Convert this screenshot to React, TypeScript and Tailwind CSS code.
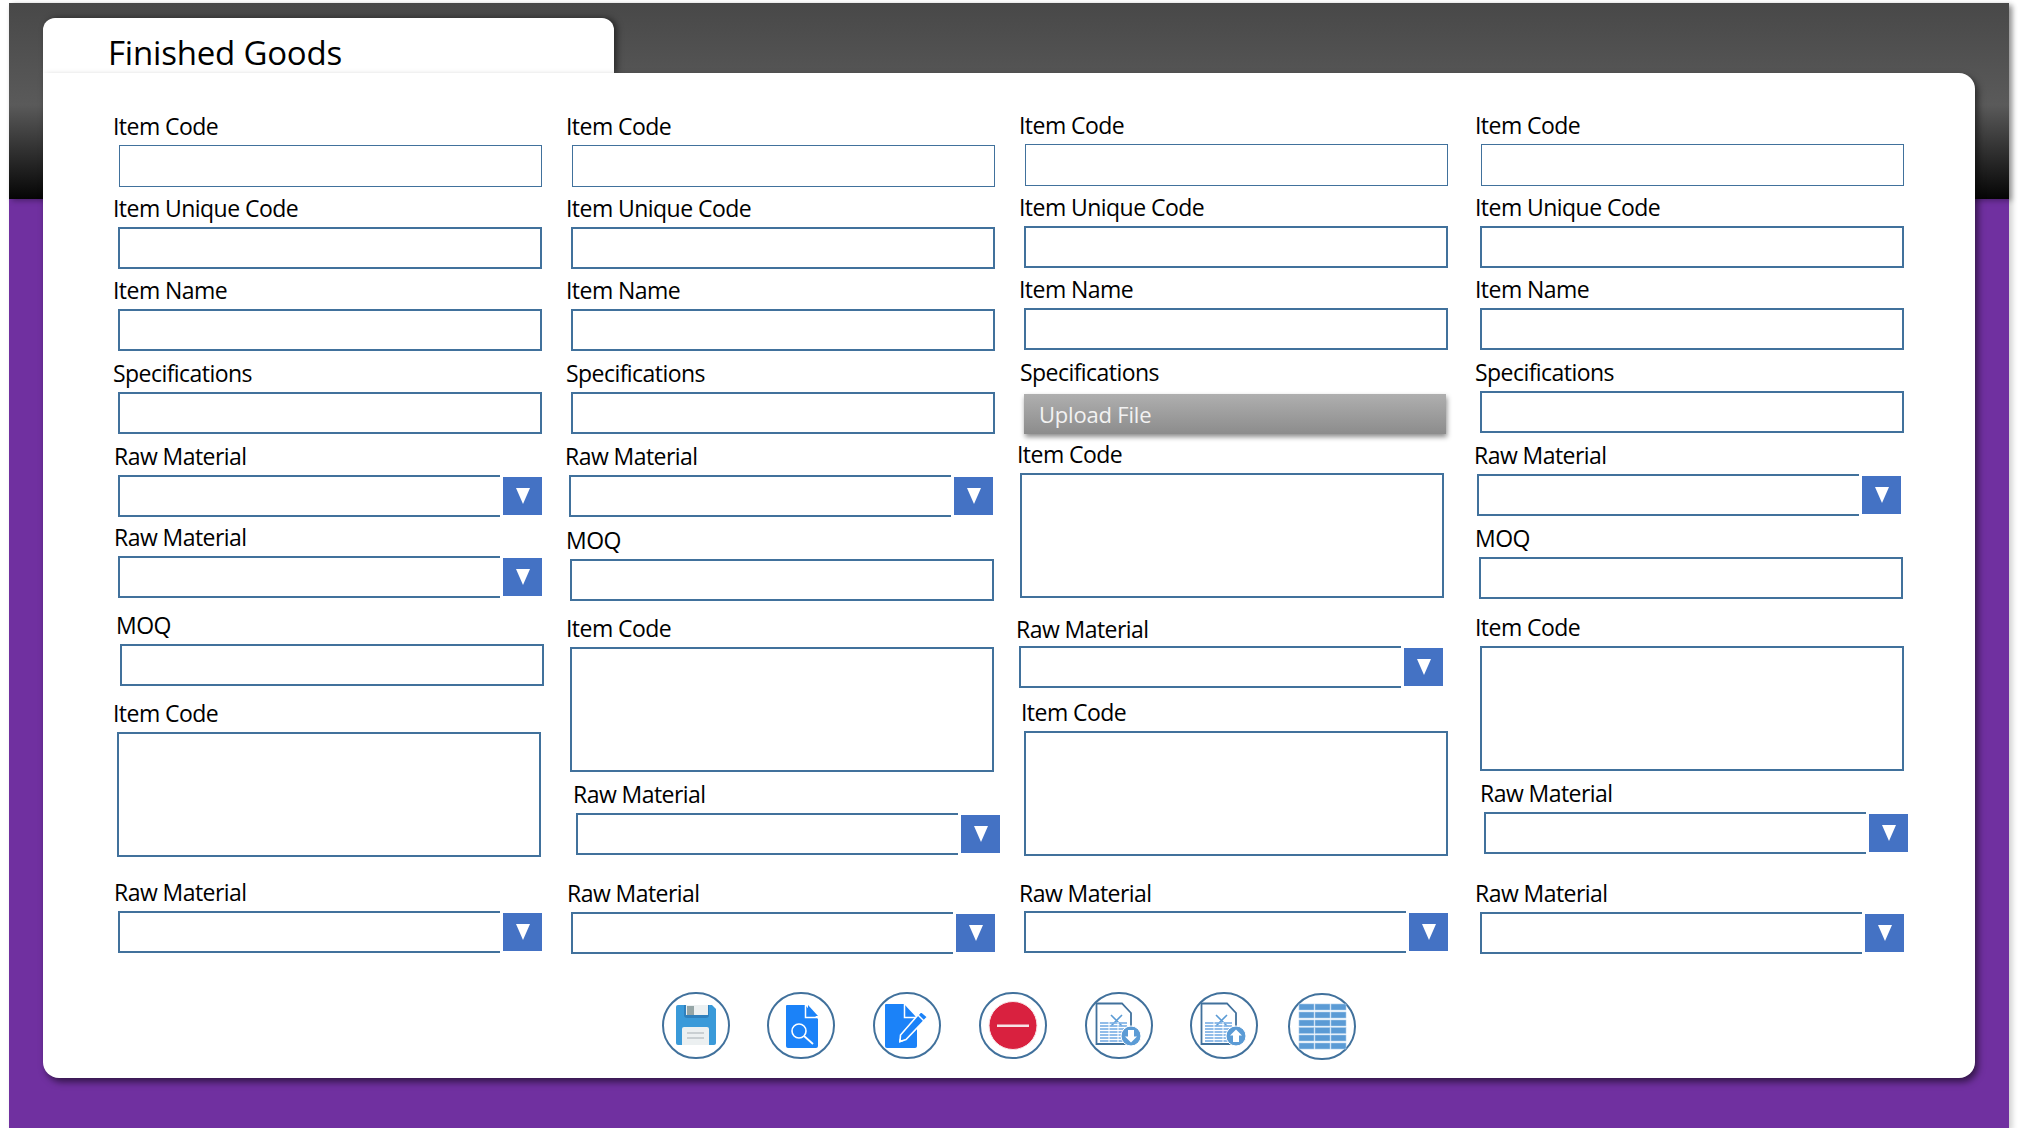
import type { ReactNode } from "react";

const BOX = "border-2 border-[#41719c] bg-white";

function Label({ text, className = "" }: { text: string; className?: string }) {
  return <div className={`h-[26px] text-[23px] leading-[26px] tracking-[-0.55px] text-black whitespace-nowrap ${className}`}>{text}</div>;
}

function InputField({ label, wrap = "", labelClass = "", boxClass = "ml-[5px]", thin = false }: {
  label: string; wrap?: string; labelClass?: string; boxClass?: string; thin?: boolean;
}) {
  return (
    <div className={`flex flex-col gap-[6px] ${wrap}`}>
      <Label text={label} className={labelClass} />
      {thin ? (
        <div className="ml-[6px] h-[42px] w-[423px] border border-[#41719c] bg-white" />
      ) : (
        <div className={`h-[42px] w-[424px] ${BOX} ${boxClass}`} />
      )}
    </div>
  );
}

function AreaField({ wrap = "", labelClass = "", boxClass = "" }: { wrap?: string; labelClass?: string; boxClass?: string }) {
  return (
    <div className={`flex flex-col gap-[6px] ${wrap}`}>
      <Label text="Item Code" className={labelClass} />
      <div className={`h-[125px] w-[424px] ${BOX} ${boxClass}`} />
    </div>
  );
}

function SelectField({ label = "Raw Material", wrap = "", gap = "gap-[6px]", labelClass = "", boxClass = "ml-[5px]" }: {
  label?: string; wrap?: string; gap?: string; labelClass?: string; boxClass?: string;
}) {
  return (
    <div className={`flex flex-col ${gap} ${wrap}`}>
      <Label text={label} className={labelClass} />
      <div className={`flex h-[42px] w-[424px] items-center gap-[3px] ${boxClass}`}>
        <div className="h-[42px] w-[382px] border-y-2 border-l-2 border-[#41719c] bg-white" />
        <div className="flex h-[38px] w-[39px] items-center justify-center bg-[#4472c4]">
          <svg width="14" height="16" viewBox="0 0 14 16"><polygon points="0,0 14,0 7,16" fill="#fff" /></svg>
        </div>
      </div>
    </div>
  );
}

function Ring({ children, className = "" }: { children: ReactNode; className?: string }) {
  return (
    <div className={`h-[67px] w-[68px] shrink-0 rounded-full border-[2px] border-[#41719c] bg-white ${className}`}>
      <svg width="64" height="63" viewBox="2 2 64 63" className="block">{children}</svg>
    </div>
  );
}

function SheetIcon({ up }: { up?: boolean }) {
  const rows = [31, 34, 37, 40, 43, 46, 49];
  return (
    <>
      <path d="M11.5 11.5H37L46 21V52H11.5Z" fill="#fff" stroke="#41719c" strokeWidth="1.8" />
      <path d="M26 23L37 34M37 23L26 34" stroke="#5b9bd5" strokeWidth="1.6" />
      {rows.map((y) => (
        <path key={y} d={`M15 ${y}H42`} stroke="#7fb2e5" strokeWidth="1.7" />
      ))}
      <path d="M24 30V51M33 30V51" stroke="#fff" strokeWidth="1" />
      <circle cx="46" cy="44" r="10" fill="#5b9bd5" stroke="#fff" strokeWidth="1" />
      {up ? (
        <path d="M46 37.5L52 43.5H49V50H43V43.5H40Z" fill="#fff" />
      ) : (
        <path d="M46 50.5L52 44.5H49V38H43V44.5H40Z" fill="#fff" />
      )}
    </>
  );
}

function ToolBar() {
  const cols = [11, 27, 43];
  const rows = [11, 19, 27, 34.5, 42, 50];
  return (
    <div className="ml-[549px] mt-[38px] flex">
      <Ring>
        <path d="M14 15a2 2 0 0 1 2-2h34l4 4v34a2 2 0 0 1-2 2H16a2 2 0 0 1-2-2Z" fill="#3a9ad9" />
        <path d="M22 13h25v10a3 3 0 0 1-3 3H25a3 3 0 0 1-3-3Z" fill="#2f80bd" />
        <rect x="24" y="13" width="22" height="10" fill="#ecf0f1" />
        <rect x="25" y="14" width="7" height="9" fill="#95a5a6" />
        <path d="M20 37a2 2 0 0 1 2-2h23a2 2 0 0 1 2 2v16H20Z" fill="#ecf0f1" />
        <path d="M25 41H42M25 46H42" stroke="#bdc3c7" strokeWidth="1.6" />
      </Ring>
      <Ring className="ml-[37px]">
        <path d="M20 13H38L51 27V54a2 2 0 0 1-2 2H21a2 2 0 0 1-2-2V14a1 1 0 0 1 1-1Z" fill="#1b82f8" />
        <path d="M41 13L51 24H41Z" fill="#1b82f8" />
        <path d="M38.5 13V25.5H51" fill="none" stroke="#fff" strokeWidth="1.5" />
        <circle cx="32" cy="39" r="7" fill="none" stroke="#fff" strokeWidth="1.6" />
        <path d="M37 44L46 52" stroke="#fff" strokeWidth="1.8" />
      </Ring>
      <Ring className="ml-[38px]">
        <path d="M13 12H31L44 26V54a2 2 0 0 1-2 2H14a2 2 0 0 1-2-2V13a1 1 0 0 1 1-1Z" fill="#1b82f8" />
        <path d="M31.5 12V25.5H44" fill="none" stroke="#fff" strokeWidth="1.5" />
        <path d="M48 19.5L54.5 25L33 47.5L27 49.5L27.5 43Z" fill="#1b82f8" stroke="#fff" strokeWidth="1.6" />
        <path d="M45 23L51 29" stroke="#fff" strokeWidth="1.4" />
        <path d="M26.5 46.5L26 50.5L30 49.5Z" fill="#fff" />
      </Ring>
      <Ring className="ml-[38px]">
        <circle cx="34" cy="33.5" r="24" fill="#d9213f" stroke="#f8e6e9" strokeWidth="1" />
        <rect x="18" y="32.5" width="32" height="2.5" fill="#f6e3e6" />
      </Ring>
      <Ring className="ml-[38px]"><SheetIcon /></Ring>
      <Ring className="ml-[37px]"><SheetIcon up /></Ring>
      <Ring className="ml-[30px] mt-px">
        {rows.map((y) => cols.map((x) => (
          <rect key={`${x}-${y}`} x={x} y={y} width="15" height="6" fill="#5b9bd5" stroke="#a9cbeb" strokeWidth="0.6" />
        )))}
      </Ring>
    </div>
  );
}

export default function App() {
  return (
    <div className="h-[1128px] w-[2018px] overflow-hidden bg-white pt-[3px] pl-[9px] font-['Open_Sans',sans-serif]">
      <div className="h-[1125px] w-[2000px] bg-[#7030a0] shadow-[3px_3px_6px_rgba(0,0,0,0.2)]">
        <div className="h-[196px] bg-[linear-gradient(180deg,#484848_0%,#5a5a5a_52%,#050505_100%)] shadow-[3px_2px_5px_rgba(0,0,0,0.3)]" />
        <div className="-mt-[181px] ml-[34px] w-[1932px]">
          <div className="h-[55px] w-[571px] rounded-t-[12px] bg-white pl-[65px] pt-[14px] shadow-[3px_0_6px_rgba(0,0,0,0.5)]">
            <div className="text-[33px] leading-[42px] tracking-[-0.2px] text-black">Finished Goods</div>
          </div>
          <div className="relative h-[1005px] rounded-b-[16px] rounded-tr-[16px] bg-white pl-[70px] pt-[40px] shadow-[3px_4px_7px_rgba(0,0,0,0.55)]">
            <div className="flex">
              <div className="flex w-[453px] flex-col">
                <InputField label="Item Code" thin />
                <InputField label="Item Unique Code" wrap="mt-[8px]" />
                <InputField label="Item Name" wrap="mt-[8px]" />
                <InputField label="Specifications" wrap="mt-[9px]" />
                <SelectField wrap="mt-[9px]" labelClass="ml-px" />
                <SelectField wrap="mt-[7px]" labelClass="ml-px" />
                <InputField label="MOQ" wrap="mt-[14px]" labelClass="ml-[3px]" boxClass="ml-[7px]" />
                <AreaField wrap="mt-[14px]" boxClass="ml-[4px]" />
                <SelectField wrap="mt-[22px]" labelClass="ml-px" />
              </div>
              <div className="flex w-[453px] flex-col">
                <InputField label="Item Code" thin />
                <InputField label="Item Unique Code" wrap="mt-[8px]" />
                <InputField label="Item Name" wrap="mt-[8px]" />
                <InputField label="Specifications" wrap="mt-[9px]" />
                <SelectField wrap="mt-[9px]" labelClass="-ml-px" boxClass="ml-[3px]" />
                <InputField label="MOQ" wrap="mt-[10px]" boxClass="ml-[4px]" />
                <AreaField wrap="mt-[14px]" boxClass="ml-[4px]" />
                <SelectField wrap="mt-[9px]" labelClass="ml-[7px]" boxClass="ml-[10px]" />
                <SelectField wrap="mt-[25px]" labelClass="ml-px" />
              </div>
              <div className="-mt-px flex w-[456px] flex-col">
                <InputField label="Item Code" thin />
                <InputField label="Item Unique Code" wrap="mt-[8px]" />
                <InputField label="Item Name" wrap="mt-[8px]" />
                <div className="mt-[9px] flex flex-col gap-[9px]">
                  <Label text="Specifications" className="ml-px" />
                  <div className="ml-[5px] flex h-[40px] w-[422px] items-center bg-[linear-gradient(180deg,#afafaf_0%,#8c8c8c_100%)] pl-[15px] text-[22px] tracking-[-0.2px] text-[#f2f2f2] shadow-[1px_3px_5px_rgba(0,0,0,0.45)]">
                    Upload File
                  </div>
                </div>
                <AreaField wrap="mt-[7px]" labelClass="-ml-[2px]" boxClass="ml-px" />
                <SelectField wrap="mt-[18px]" gap="gap-[4px]" labelClass="-ml-[3px]" boxClass="ml-0" />
                <AreaField wrap="mt-[11px]" labelClass="ml-[2px]" boxClass="ml-[5px]" />
                <SelectField wrap="mt-[24px]" gap="gap-[5px]" />
              </div>
              <div className="-mt-px flex w-[440px] flex-col">
                <InputField label="Item Code" thin />
                <InputField label="Item Unique Code" wrap="mt-[8px]" />
                <InputField label="Item Name" wrap="mt-[8px]" />
                <InputField label="Specifications" wrap="mt-[9px]" />
                <SelectField wrap="mt-[9px]" labelClass="-ml-px" boxClass="ml-[2px]" />
                <InputField label="MOQ" wrap="mt-[9px]" boxClass="ml-[4px]" />
                <AreaField wrap="mt-[15px]" boxClass="ml-[5px]" />
                <SelectField wrap="mt-[9px]" labelClass="ml-[5px]" boxClass="ml-[9px]" />
                <SelectField wrap="mt-[26px]" />
              </div>
            </div>
            <ToolBar />
          </div>
        </div>
      </div>
    </div>
  );
}
